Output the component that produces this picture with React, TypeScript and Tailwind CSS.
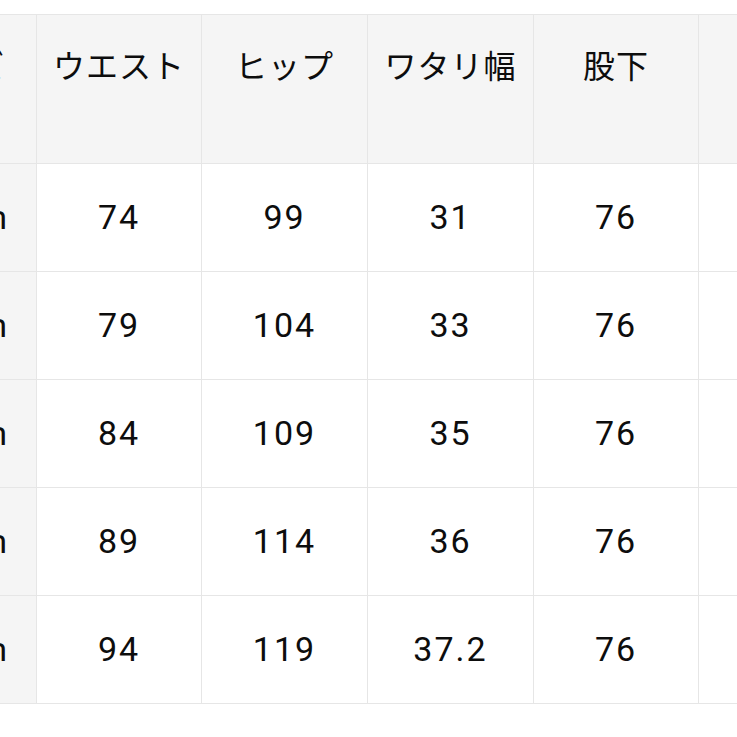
import React from "react";

const headers = ["サイズ", "ウエスト", "ヒップ", "ワタリ幅", "股下", "総丈"];
const rows = [
  ["71cm", "74", "99", "31", "76", "100"],
  ["76cm", "79", "104", "33", "76", "101"],
  ["81cm", "84", "109", "35", "76", "102"],
  ["86cm", "89", "114", "36", "76", "103"],
  ["91cm", "94", "119", "37.2", "76", "104"],
];

const widths = ["w-[166px]", "w-[165px]", "w-[166px]", "w-[166px]", "w-[165px]", "w-[166px]"];

export default function App() {
  return (
    <div
      className="w-[737px] h-[737px] bg-white overflow-hidden pt-[14px] text-[#0d0d0d]"
      style={{ fontFamily: 'Roboto, "Noto Sans CJK JP", sans-serif' }}
    >
      <div className="ml-[-129px] w-[1000px] border-t border-[#e6e6e6]">
        <div className="flex h-[149px] bg-[#f5f5f5] border-b border-[#e6e6e6]">
          {headers.map((h, i) => (
            <div
              key={i}
              className={`${widths[i]} shrink-0 border-r border-[#e6e6e6] pt-[30px] text-[32px] leading-[44px] tracking-[1px] ${
                i === 0 ? "text-right pr-[31px]" : "text-center"
              }`}
            >
              {h}
            </div>
          ))}
        </div>
        {rows.map((r, ri) => (
          <div key={ri} className="flex h-[108px] border-b border-[#e6e6e6]">
            {r.map((c, i) => (
              <div
                key={i}
                className={`${widths[i]} shrink-0 border-r border-[#e6e6e6] flex items-center text-[34px] tracking-[2px] ${
                  i === 0 ? "bg-[#f5f5f5] justify-end pr-[27px]" : "bg-white justify-center"
                }`}
              >
                {c}
              </div>
            ))}
          </div>
        ))}
      </div>
    </div>
  );
}
